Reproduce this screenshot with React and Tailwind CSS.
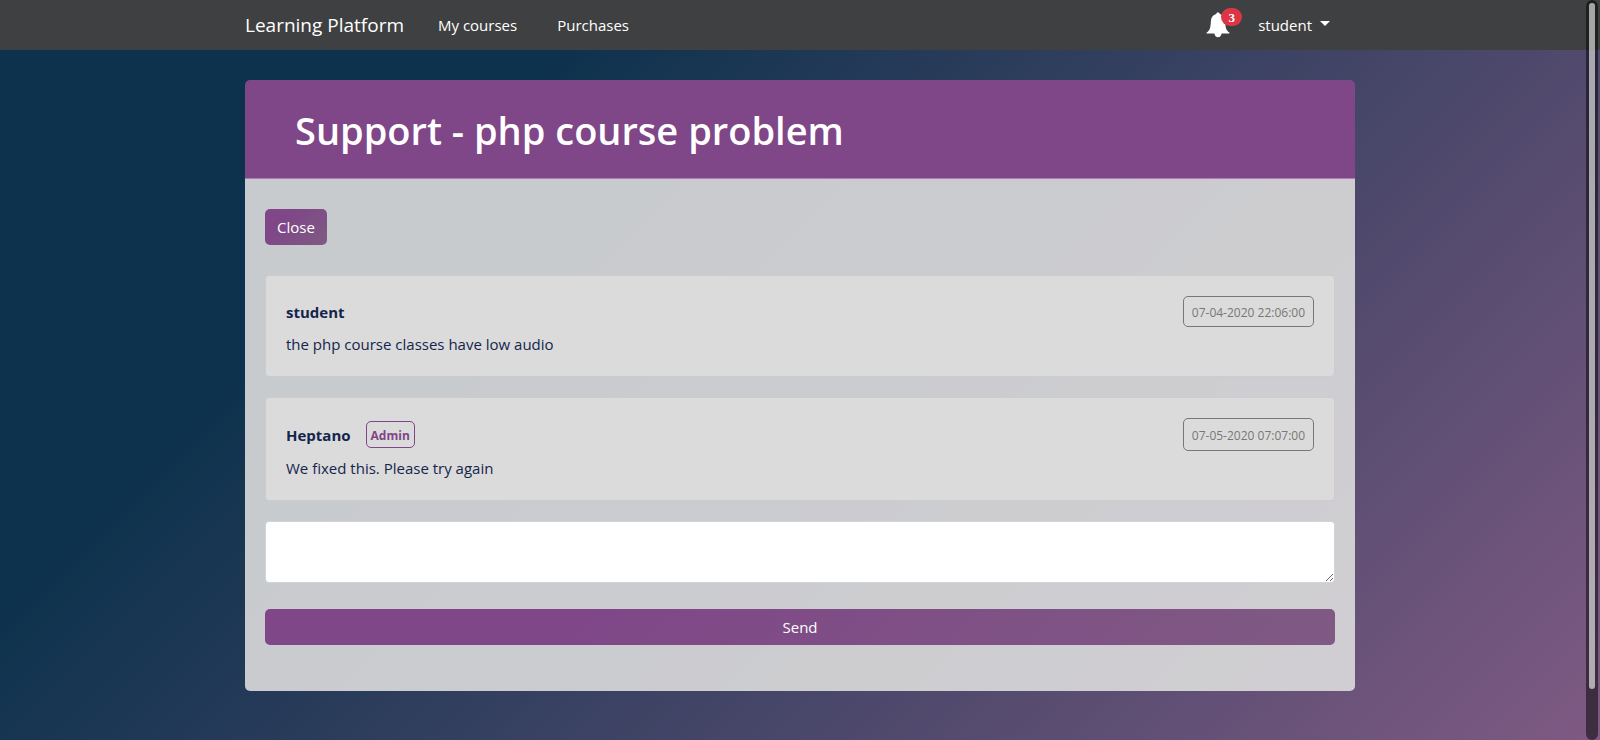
import React from "react";

const messages = [
  { author: "student", admin: false, date: "07-04-2020 22:06:00", text: "the php course classes have low audio" },
  { author: "Heptano", admin: true, date: "07-05-2020 07:07:00", text: "We fixed this. Please try again" },
];

function Bell() {
  return (
    <svg viewBox="0 0 24 26" className="h-[26px] w-6 fill-white" aria-hidden="true">
      <path d="M12 0.500c-1 0-1.700.6-1.900 1.500C7 2.900 5.100 5.500 4.900 9c-.2 4-.5 6.500-1.300 8.300-.6 1.300-1.700 2.500-3 3.300v.9h7.800c.3 2.100 1.700 3.800 3.600 3.800s3.300-1.700 3.600-3.800h7.800v-.9c-1.300-.8-2.400-2-3-3.300-.8-1.800-1.100-4.300-1.300-8.300-.2-3.500-2.100-6.100-5.200-7C13.700 1.100 13 .5 12 .5z" />
    </svg>
  );
}

function Navbar() {
  return (
    <nav className="flex h-[50px] items-center bg-[#3f4041] text-white">
      <div className="mx-auto flex w-full max-w-[1110px] items-center">
        <a href="#" className="text-[19px] leading-[30px]">Learning Platform</a>
        <a href="#" className="ml-[34px]">My courses</a>
        <a href="#" className="ml-10">Purchases</a>
        <div className="mr-[25px] ml-auto flex items-center">
          <button type="button" aria-label="3 notifications" className="relative mr-7">
            <Bell />
            <span className="absolute -top-1 left-[15px] flex h-[18px] w-[21px] items-center justify-center rounded-full bg-[#dc3545] pt-px font-['Liberation_Serif',serif] text-[13px] leading-4 font-bold">
              3
            </span>
          </button>
          <button type="button" className="flex items-center gap-2">
            student
            <svg viewBox="0 0 10 5" className="mb-[3px] h-[5px] w-[10px] fill-white" aria-hidden="true">
              <path d="M0 0h10L5 5z" />
            </svg>
          </button>
        </div>
      </div>
    </nav>
  );
}

function Message({ author, admin, date, text }) {
  return (
    <article className="mb-5 rounded border border-[#cccccd] bg-[#dbdbdb] p-5 text-[#14254c]">
      <header className="flex justify-between">
        <div className="flex items-center">
          <h2 className="font-bold">{author}</h2>
          {admin && (
            <span className="my-[3px] ml-[15px] rounded-[5px] border border-[#7f4688] px-1 pt-1.5 pb-1 text-[12px] leading-[15px] font-bold text-[#7f4688]">
              Admin
            </span>
          )}
        </div>
        <time className="flex items-center rounded-[5px] border border-[#777] px-2 pt-1.5 pb-1 text-[12px] leading-[19px] text-[#777]">
          {date}
        </time>
      </header>
      <p className="mt-[5px]">{text}</p>
    </article>
  );
}

export default function App() {
  return (
    <div className="relative min-h-screen bg-[linear-gradient(315deg,#7f5a83_0%,#0d324d_74%)] font-['Open_Sans',sans-serif] text-[15px] leading-6">
      <Navbar />
      <main className="mx-auto mt-[30px] max-w-[1110px] overflow-hidden rounded-[5px]">
        <header className="border-b border-[#b07cb8] bg-[#7f4688] px-[50px] pt-[26px] pb-6">
          <h1 className="text-[38px] leading-[48px] font-semibold text-white">Support - php course problem</h1>
        </header>
        <div className="bg-[#dbdbdb]/90 px-5 pt-[30px] pb-[46px]">
          <button
            type="button"
            className="mb-[30px] block h-9 rounded-[5px] bg-[linear-gradient(315deg,#7f5a83_0%,#7f4688_74%)] px-3 text-white"
          >
            Close
          </button>
          {messages.map((m) => (
            <Message key={m.date} {...m} />
          ))}
          <form>
            <textarea
              aria-label="Message"
              rows={2}
              className="block h-[62px] w-full resize-y rounded border border-[#ced4da] bg-white px-3 py-1.5"
            />
            <button
              type="button"
              className="mt-[26px] block h-9 w-full rounded-[5px] bg-[linear-gradient(315deg,#7f5a83_0%,#7f4688_74%)] text-white"
            >
              Send
            </button>
          </form>
        </div>
      </main>
      <div className="absolute top-0 right-0.5 bottom-0 w-3 rounded-full bg-black/50 p-[3px]" aria-hidden="true">
        <div className="h-[calc(100%-48px)] rounded-full bg-white/60" />
      </div>
    </div>
  );
}
